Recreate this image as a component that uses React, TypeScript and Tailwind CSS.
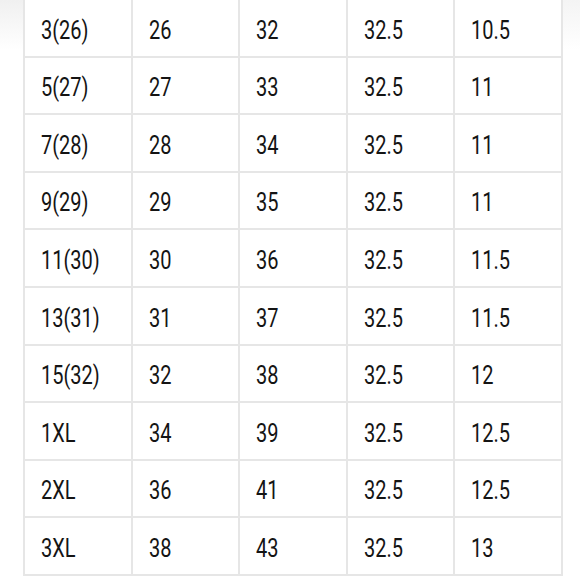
const rows: string[][] = [
  ["3(26)", "26", "32", "32.5", "10.5"],
  ["5(27)", "27", "33", "32.5", "11"],
  ["7(28)", "28", "34", "32.5", "11"],
  ["9(29)", "29", "35", "32.5", "11"],
  ["11(30)", "30", "36", "32.5", "11.5"],
  ["13(31)", "31", "37", "32.5", "11.5"],
  ["15(32)", "32", "38", "32.5", "12"],
  ["1XL", "34", "39", "32.5", "12.5"],
  ["2XL", "36", "41", "32.5", "12.5"],
  ["3XL", "38", "43", "32.5", "13"],
];

export default function App() {
  return (
    <div className="relative w-[580px] h-[580px] overflow-hidden bg-white">
      {/* faint shadow at the top corners */}
      <div className="absolute left-0 top-0 w-[24px] h-[50px] bg-gradient-to-b from-[#f0f0f0] to-white" />
      <div className="absolute right-0 top-0 w-[18px] h-[50px] bg-gradient-to-b from-[#f4f4f4] to-white" />
      <div className="relative ml-[23px] mt-[-2px] w-[540px] border-l-2 border-t-2 border-[#e6e6e6] bg-white">
        {rows.map((row, i) => (
          <div key={i} className="grid grid-cols-5 h-[57.6px]">
            {row.map((cell, j) => (
              <div
                key={j}
                className="flex items-center pl-[16px] pt-[5px] border-r-2 border-b-2 border-[#e6e6e6] text-[25px] text-[#141414] font-['Roboto',sans-serif]"
              >
                <span className="inline-block origin-left scale-x-[0.8] whitespace-nowrap">
                  {cell}
                </span>
              </div>
            ))}
          </div>
        ))}
      </div>
    </div>
  );
}
